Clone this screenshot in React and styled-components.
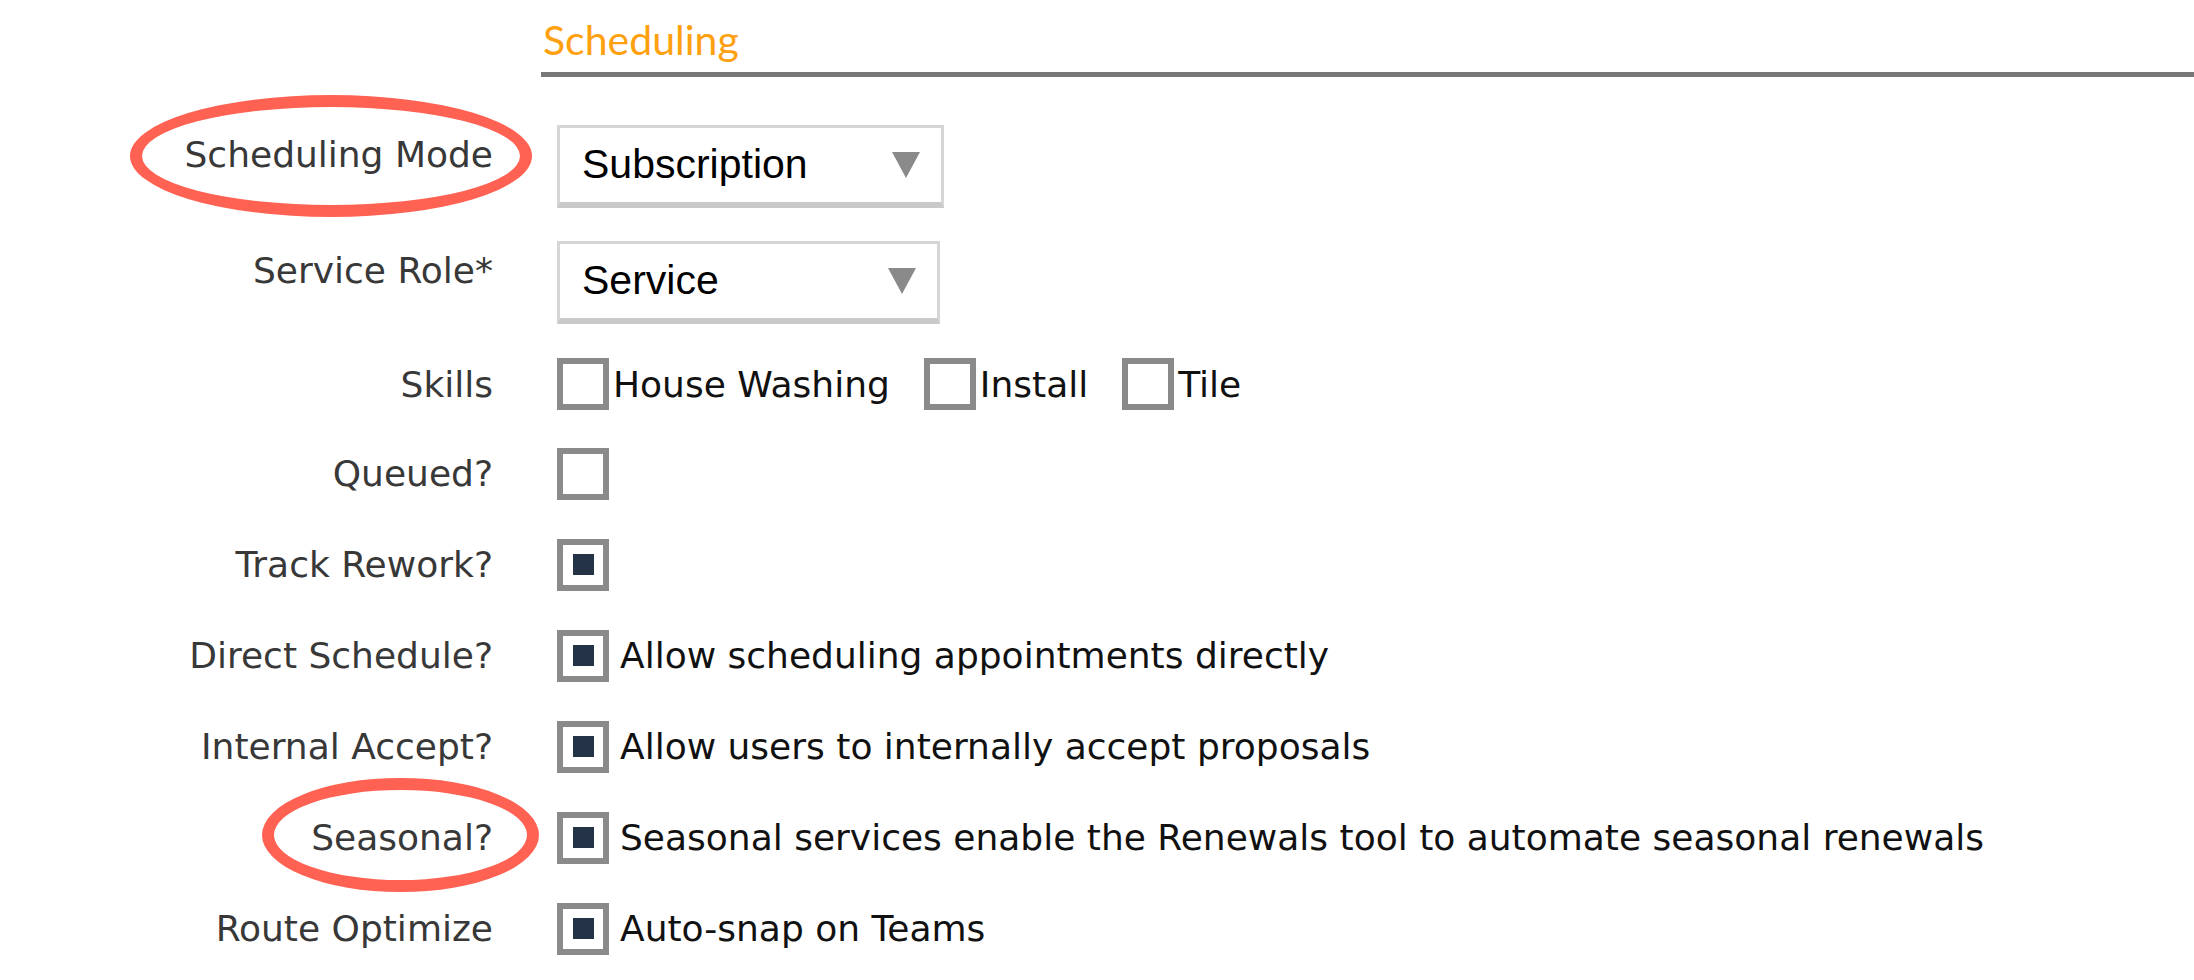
import styled, { createGlobalStyle } from "styled-components";

const GlobalStyle = createGlobalStyle`
  html, body {
    margin: 0;
    padding: 0;
    background: #ffffff;
  }
  body {
    font-family: "DejaVu Sans", "Liberation Sans", sans-serif;
  }
`;

const Page = styled.div`
  position: relative;
  width: 2194px;
  height: 980px;
  overflow: hidden;
  background: #ffffff;
`;

const SectionHeader = styled.h2`
  margin: 0 0 31px 541px;
  padding: 20px 0 12px 2px;
  height: 40px;
  line-height: 40px;
  font-family: "Lato", "Open Sans", sans-serif;
  font-size: 41px;
  font-weight: 400;
  color: #ffa00f;
  border-bottom: 5px solid #777777;
`;

const Form = styled.div`
  display: grid;
  grid-template-columns: 493px 1fr;
  column-gap: 64px;
`;

const Label = styled.div`
  box-sizing: border-box;
  display: flex;
  align-items: center;
  justify-content: flex-end;
  height: ${(p) => p.$h}px;
  padding-bottom: ${(p) => (p.$raised ? 24 : 0)}px;
  font-size: 36px;
  color: #383838;
  white-space: nowrap;
`;

const Field = styled.div`
  display: flex;
  align-items: center;
  gap: 34px;
  height: ${(p) => p.$h}px;
`;

const Select = styled.div`
  box-sizing: border-box;
  display: flex;
  align-items: center;
  justify-content: space-between;
  width: ${(p) => p.$w}px;
  height: 83px;
  padding: 0 21px 0 22px;
  border: 3px solid #d6d6d6;
  border-bottom: 6px solid #c9c9c9;
  background: #ffffff;
  font-family: "Liberation Sans", Arial, sans-serif;
  font-size: 41px;
  color: #000000;
`;

const Caret = styled.span`
  width: 0;
  height: 0;
  border-left: 14px solid transparent;
  border-right: 14px solid transparent;
  border-top: 26px solid #8a8a8a;
`;

const Choice = styled.label`
  display: flex;
  align-items: center;
  gap: ${(p) => p.$gap}px;
  font-size: 36px;
  color: #111111;
  white-space: nowrap;
`;

const Box = styled.span`
  box-sizing: border-box;
  display: flex;
  align-items: center;
  justify-content: center;
  flex: none;
  width: 52px;
  height: 52px;
  border: 6px solid #8a8a8a;
  background: #ffffff;

  &::after {
    content: "";
    display: ${(p) => (p.$checked ? "block" : "none")};
    width: 21px;
    height: 21px;
    background: #243446;
  }
`;

const Callout = styled.div`
  position: absolute;
  box-sizing: border-box;
  border: 12px solid #ff6252;
  border-radius: 50%;
  pointer-events: none;
`;

const rows = [
  { label: "Scheduling Mode", h: 116, select: { value: "Subscription", w: 387 } },
  { label: "Service Role*", h: 116, select: { value: "Service", w: 383 } },
  {
    label: "Skills",
    h: 88,
    options: [
      { text: "House Washing", checked: false },
      { text: "Install", checked: false },
      { text: "Tile", checked: false },
    ],
  },
  { label: "Queued?", h: 91, options: [{ text: "", checked: false }] },
  { label: "Track Rework?", h: 91, options: [{ text: "", checked: true }] },
  {
    label: "Direct Schedule?",
    h: 91,
    note: true,
    options: [{ text: "Allow scheduling appointments directly", checked: true }],
  },
  {
    label: "Internal Accept?",
    h: 91,
    note: true,
    options: [{ text: "Allow users to internally accept proposals", checked: true }],
  },
  {
    label: "Seasonal?",
    h: 91,
    note: true,
    options: [
      {
        text: "Seasonal services enable the Renewals tool to automate seasonal renewals",
        checked: true,
      },
    ],
  },
  {
    label: "Route Optimize",
    h: 91,
    note: true,
    options: [{ text: "Auto-snap on Teams", checked: true }],
  },
];

const App = () => {
  return (
    <Page>
      <GlobalStyle />
      <SectionHeader>Scheduling</SectionHeader>

      <Form>
        {rows.map((row) => [
          <Label key={row.label + "-l"} $h={row.h} $raised={!!row.select}>
            {row.label}
          </Label>,
          <Field key={row.label + "-f"} $h={row.h}>
            {row.select && (
              <Select $w={row.select.w}>
                {row.select.value}
                <Caret />
              </Select>
            )}
            {row.options &&
              row.options.map((opt, i) => (
                <Choice key={i} $gap={row.note ? 11 : 4}>
                  <Box $checked={opt.checked} />
                  {opt.text}
                </Choice>
              ))}
          </Field>,
        ])}
      </Form>

      <Callout style={{ left: 130, top: 95, width: 402, height: 122 }} />
      <Callout style={{ left: 262, top: 778, width: 277, height: 114 }} />
    </Page>
  );
};

export default App;
